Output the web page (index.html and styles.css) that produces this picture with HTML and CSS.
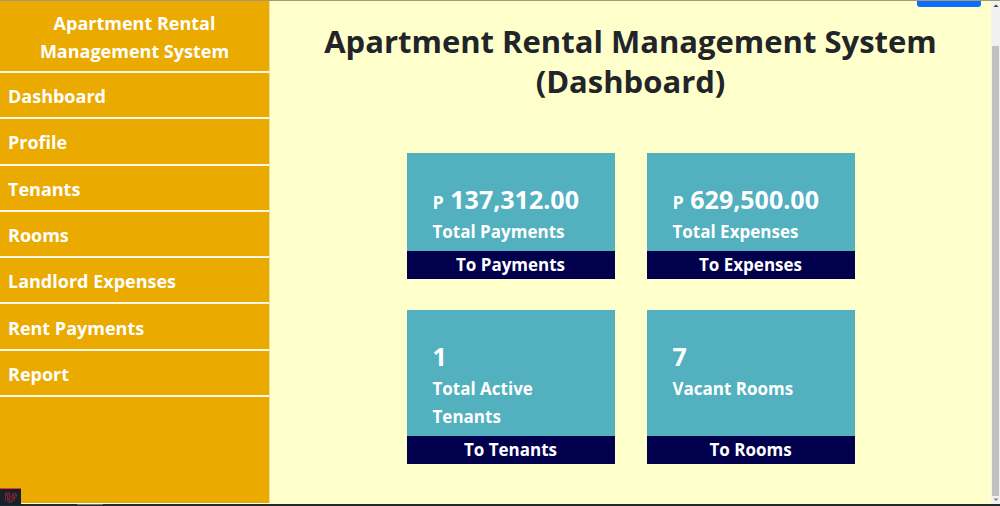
FILE: index.html
```html
<!DOCTYPE html>
<html lang="en">
<head>
<meta charset="utf-8">
<title>Apartment Rental Management System</title>
<link rel="stylesheet" href="styles.css">
</head>
<body>
<div class="app">
  <aside class="sidebar">
    <h2 class="brand">Apartment Rental<br>Management System</h2>
    <nav class="menu">
      <a href="#">Dashboard</a>
      <a href="#">Profile</a>
      <a href="#">Tenants</a>
      <a href="#">Rooms</a>
      <a href="#">Landlord Expenses</a>
      <a href="#">Rent Payments</a>
      <a href="#">Report</a>
    </nav>
  </aside>
  <main class="content">
    <button class="top-button" type="button" aria-label="Account"></button>
    <h1 class="title">Apartment Rental Management System (Dashboard)</h1>
    <div class="cards">
      <section class="card">
        <div class="card-body">
          <p class="value"><span class="currency">P</span> 137,312.00</p>
          <p class="label">Total Payments</p>
        </div>
        <a class="card-link" href="#">To Payments</a>
      </section>
      <section class="card">
        <div class="card-body">
          <p class="value"><span class="currency">P</span> 629,500.00</p>
          <p class="label">Total Expenses</p>
        </div>
        <a class="card-link" href="#">To Expenses</a>
      </section>
      <section class="card">
        <div class="card-body">
          <p class="value">1</p>
          <p class="label">Total Active Tenants</p>
        </div>
        <a class="card-link" href="#">To Tenants</a>
      </section>
      <section class="card">
        <div class="card-body">
          <p class="value">7</p>
          <p class="label">Vacant Rooms</p>
        </div>
        <a class="card-link" href="#">To Rooms</a>
      </section>
    </div>
  </main>
  <div class="scrollbar" aria-hidden="true">
    <svg class="arrow" viewBox="0 0 8 8"><path d="M1.5 6 4 3.5 6.5 6z" fill="#404040"/></svg>
    <div class="thumb"></div>
    <svg class="arrow" viewBox="0 0 8 8"><path d="M1.5 2.5 4 5 6.5 2.5z" fill="#808080"/></svg>
  </div>
</div>
<footer class="taskbar"><span class="task"></span></footer>
<button class="debug" type="button" aria-label="Debug bar">
  <svg viewBox="0 0 14 14" fill="none" stroke="#8a2630" stroke-width="1"><path d="M1.5 3.5 3.5 2.5 5.5 3.5V8L8 6.5V4.5L10.5 3 12.5 4.5V6.5L10.5 8V10L6 12.5 1.5 10zM1.5 3.5 3.5 4.5 5.5 3.5M3.5 4.5V9L6 10.2 10.5 8 8 6.5M8 4.5 10.3 5.5 12.5 4.5M10.3 5.5V8M6 10.2V12.5M3.5 9 5.5 8"/></svg>
</button>
</body>
</html>
```
FILE: styles.css
```css
* { box-sizing: border-box; }

body {
  margin: 0;
  min-height: 100vh;
  display: flex;
  flex-direction: column;
  border-top: 1px solid #a59a74;
  background: #ffffcc;
  color: #212529;
  font-family: "Open Sans", "Noto Sans", sans-serif;
  font-weight: 700;
}

h1, h2, p { margin: 0; }
a { color: inherit; text-decoration: none; }

.app { flex: 1; display: flex; }

.sidebar {
  width: 27%;
  background: #eaaa00;
  color: #fff;
  border-right: 1px solid #f2dda0;
  border-bottom: 1px solid #fffbe8;
}

.brand {
  padding: 8px 0 6px;
  border-bottom: 2px solid #fff8e6;
  font-size: 18px;
  line-height: 28px;
  text-align: center;
}

.menu {
  min-height: 324px;
  display: grid;
  grid-auto-rows: 1fr;
}

.menu a {
  display: flex;
  align-items: center;
  padding: 2px 8px 0;
  border-bottom: 2px solid #fff8e6;
  font-size: 18px;
  line-height: 28px;
}

.content {
  position: relative;
  flex: 1;
  padding: 20px 32px 38px;
}

.top-button {
  position: absolute;
  top: 0;
  right: 10px;
  width: 64px;
  height: 6px;
  padding: 0;
  border: 0;
  border-radius: 0 0 3px 3px;
  background: #0d6efd;
}

.title {
  font-size: 31px;
  line-height: 40px;
  text-align: center;
}

.cards {
  display: grid;
  grid-template-columns: 208px 208px;
  justify-content: center;
  gap: 31px 32px;
  margin-top: 52px;
}

.card {
  display: flex;
  flex-direction: column;
  background: #52b0bf;
  color: #fff;
}

.card-body { flex: 1; padding: 28px 26px 5px; }
.value { font-size: 25px; line-height: 37px; }
.currency { font-size: 18px; line-height: 20px; }
.label { font-size: 17px; line-height: 28px; }

.card-link {
  background: #00004d;
  font-size: 17px;
  line-height: 28px;
  text-align: center;
}

.scrollbar {
  width: 9px;
  display: flex;
  flex-direction: column;
  align-items: center;
  background: #f1f1f1;
}

.arrow { width: 8px; height: 8px; }
.thumb { flex: 1; width: 7px; margin-top: 37px; background: #c1c1c1; }

.taskbar { height: 2px; padding-left: 77px; background: #1c2b2c; }
.task { display: block; width: 26px; height: 1px; background: #6c7680; }

.debug {
  position: fixed;
  left: 0;
  bottom: 1px;
  width: 21px;
  height: 17px;
  display: flex;
  justify-content: center;
  padding: 1px 0 0;
  border: 0;
  border-top: 1px solid #ff2d40;
  background: #18202c;
}

.debug svg { width: 14px; height: 14px; }
```
